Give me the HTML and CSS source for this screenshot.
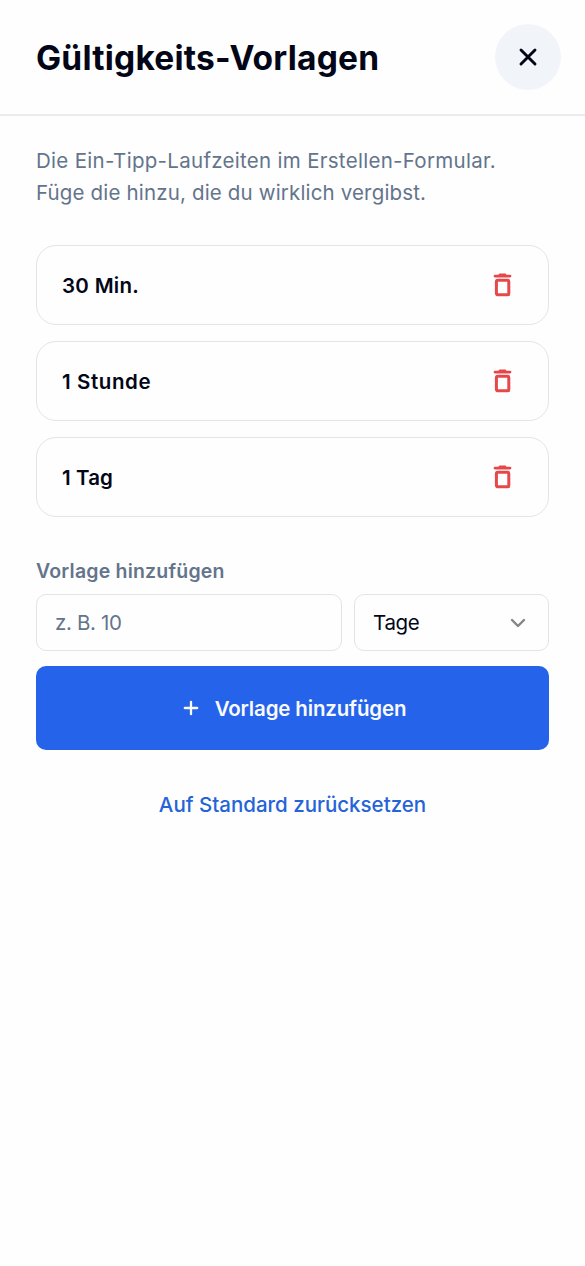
FILE: index.html
```html
<!DOCTYPE html>
<html lang="de">
<head>
<meta charset="utf-8">
<title>Gültigkeits-Vorlagen</title>
<link rel="stylesheet" href="styles.css">
</head>
<body>
<header class="header">
  <h1 class="title">Gültigkeits-Vorlagen</h1>
  <button class="close" aria-label="Schließen">
    <svg width="20" height="20" viewBox="0 0 20 20" fill="none" stroke="currentColor" stroke-width="2.9" stroke-linecap="round"><path d="M3 3l14 14M17 3L3 17"/></svg>
  </button>
</header>
<main class="content">
  <p class="intro"><span class="line-one">Die Ein-Tipp-Laufzeiten im Erstellen-Formular.</span><br><span class="line-two">Füge die hinzu, die du wirklich vergibst.</span></p>
  <ul class="list">
    <li class="item"><span class="name-min">30 Min.</span>
      <svg class="trash" width="20" height="26" viewBox="0 0 20 26" fill="none" stroke="currentColor"><path d="M2 4.1h15M7 2.9h5" stroke-width="2.8" stroke-linecap="round"/><rect x="3.4" y="8.2" width="12.4" height="14.6" rx="1.4" stroke-width="3"/></svg></li>
    <li class="item"><span class="name-hour">1 Stunde</span>
      <svg class="trash" width="20" height="26" viewBox="0 0 20 26" fill="none" stroke="currentColor"><path d="M2 4.1h15M7 2.9h5" stroke-width="2.8" stroke-linecap="round"/><rect x="3.4" y="8.2" width="12.4" height="14.6" rx="1.4" stroke-width="3"/></svg></li>
    <li class="item"><span class="name-day">1 Tag</span>
      <svg class="trash" width="20" height="26" viewBox="0 0 20 26" fill="none" stroke="currentColor"><path d="M2 4.1h15M7 2.9h5" stroke-width="2.8" stroke-linecap="round"/><rect x="3.4" y="8.2" width="12.4" height="14.6" rx="1.4" stroke-width="3"/></svg></li>
  </ul>
  <div class="label">Vorlage hinzufügen</div>
  <div class="fields">
    <div class="field amount">z. B. 10</div>
    <div class="field unit"><span>Tage</span>
      <svg width="16" height="10" viewBox="0 0 16 10" fill="none" stroke="#858585" stroke-width="2.4" stroke-linecap="round" stroke-linejoin="round"><path d="M2 2l6 6 6-6"/></svg></div>
  </div>
  <button class="add">
    <svg width="16" height="16" viewBox="0 0 16 16" fill="none" stroke="currentColor" stroke-width="2.3" stroke-linecap="round"><path d="M8 1.8v12.4M1.8 8h12.4"/></svg>
    <span>Vorlage hinzufügen</span>
  </button>
  <button class="reset">Auf Standard zurücksetzen</button>
</main>
</body>
</html>
```

FILE: styles.css
```css
* { box-sizing: border-box; }
body {
  margin: 0;
  min-height: 1266px;
  background: #fefefe;
  color: #020617;
  font-family: Inter, "Liberation Sans", sans-serif;
  font-size: 20.5px;
}
button { border: 0; padding: 0; font: inherit; }
.header {
  height: 116px;
  padding: 0 24px 0 36px;
  border-bottom: 2px solid #e9ebee;
  display: flex;
  align-items: center;
  justify-content: space-between;
}
.title { margin: 2px 0 0; font-size: 33.5px; font-weight: 700; letter-spacing: 0.22px; white-space: nowrap; }
.close {
  width: 66px;
  height: 66px;
  border-radius: 50%;
  background: #f1f5f9;
  color: #020617;
  display: flex;
  align-items: center;
  justify-content: center;
}
.content { padding: 29px 36px 0; }
.intro { margin: 0; color: #64748b; line-height: 32px; white-space: nowrap; }
.line-one { letter-spacing: 0.29px; }
.line-two { letter-spacing: 0.16px; }
.list { list-style: none; margin: 36px 0 0; padding: 0; display: grid; gap: 16px; }
.item {
  height: 80px;
  padding: 0 35px 0 25px;
  border: 1px solid #e1e5e9;
  border-radius: 20px;
  display: flex;
  align-items: center;
  justify-content: space-between;
  font-weight: 600;
}
.name-min { letter-spacing: 0.3px; }
.name-hour { letter-spacing: 0.6px; }
.name-day { letter-spacing: 0.1px; }
.trash { color: #e5484b; }
.label { margin-top: 40px; line-height: 28px; font-size: 19.5px; font-weight: 600; letter-spacing: 0.2px; color: #64748b; }
.fields { margin-top: 9px; display: grid; grid-template-columns: 306px 195px; gap: 12px; }
.field {
  height: 57px;
  padding: 0 22px 0 18px;
  border: 1px solid #e1e5e9;
  border-radius: 10px;
  display: flex;
  align-items: center;
  justify-content: space-between;
}
.amount { color: #64748b; letter-spacing: -0.35px; }
.unit { letter-spacing: -0.35px; }
.add {
  width: 100%;
  height: 84px;
  margin-top: 15px;
  padding-left: 4px;
  border-radius: 10px;
  background: #2563eb;
  color: #f8fafc;
  font-weight: 600;
  letter-spacing: -0.16px;
  display: flex;
  align-items: center;
  justify-content: center;
  gap: 16px;
}
.reset { display: block; margin: 39px auto 0; line-height: 32px; background: none; color: #2563d8; font-weight: 500; }
```
